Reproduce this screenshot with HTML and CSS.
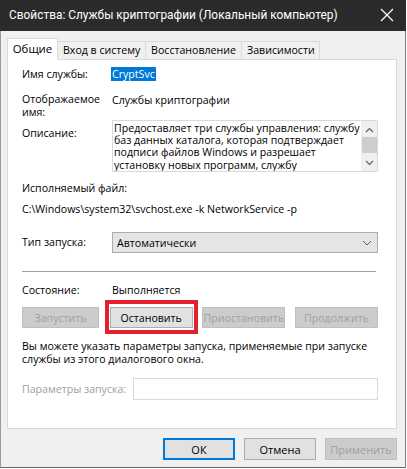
FILE: index.html
```html
<!DOCTYPE html>
<html lang="ru">
<head>
<meta charset="utf-8">
<title>Свойства: Службы криптографии</title>
<link rel="stylesheet" href="styles.css">
</head>
<body>
<div class="window">
  <div class="titlebar">
    <span class="title">Свойства: Службы криптографии (Локальный компьютер)</span>
    <svg class="close" width="14" height="14" viewBox="0 0 14 14"><path d="M1 1 L13 13 M13 1 L1 13" stroke="#fff" stroke-width="1.2" fill="none"/></svg>
  </div>
  <div class="body">
    <div class="tabs">
      <div class="tab active">Общие</div>
      <div class="tab">Вход в систему</div>
      <div class="tab">Восстановление</div>
      <div class="tab">Зависимости</div>
    </div>
    <div class="panel">
      <div class="row row-name">
        <div class="label">Имя службы:</div>
        <div class="value"><span class="selected">CryptSvc</span></div>
      </div>
      <div class="row row-display">
        <div class="label">Отображаемое<br>имя:</div>
        <div class="value">Службы криптографии</div>
      </div>
      <div class="row row-desc">
        <div class="label label-desc">Описание:</div>
        <div class="textbox">
          <div class="textbox-text">Предоставляет три службы управления: службу баз данных каталога, которая подтверждает подписи файлов Windows и разрешает установку новых программ, службу</div>
          <div class="scrollbar">
            <svg class="arrow" width="9" height="6" viewBox="0 0 9 6"><path d="M1 5 L4.5 1.5 L8 5" stroke="#606060" stroke-width="1.2" fill="none"/></svg>
            <div class="thumb"></div>
            <div class="track"></div>
            <svg class="arrow" width="9" height="6" viewBox="0 0 9 6"><path d="M1 1 L4.5 4.5 L8 1" stroke="#606060" stroke-width="1.2" fill="none"/></svg>
          </div>
        </div>
      </div>
      <div class="line line-exe-label">Исполняемый файл:</div>
      <div class="line line-exe">C:\Windows\system32\svchost.exe -k NetworkService -p</div>
      <div class="row row-startup">
        <div class="label">Тип запуска:</div>
        <div class="combo">
          <span>Автоматически</span>
          <svg width="10" height="6" viewBox="0 0 10 6"><path d="M1 1 L5 5 L9 1" stroke="#606060" stroke-width="1" fill="none"/></svg>
        </div>
      </div>
      <div class="separator"></div>
      <div class="row row-status">
        <div class="label">Состояние:</div>
        <div class="value">Выполняется</div>
      </div>
      <div class="service-buttons">
        <button class="btn btn-start" disabled>Запустить</button>
        <button class="btn btn-stop">Остановить</button>
        <button class="btn btn-wide" disabled>Приостановить</button>
        <button class="btn btn-wide" disabled>Продолжить</button>
      </div>
      <div class="hint">Вы можете указать параметры запуска, применяемые при запуске службы из этого диалогового окна.</div>
      <div class="row row-params">
        <div class="label-params">Параметры запуска:</div>
        <div class="input"></div>
      </div>
    </div>
    <div class="footer">
      <button class="btn btn-dialog btn-default">ОК</button>
      <button class="btn btn-dialog">Отмена</button>
      <button class="btn btn-dialog" disabled>Применить</button>
    </div>
  </div>
</div>
</body>
</html>
```
FILE: styles.css
```css
* { box-sizing: border-box; }
html, body { margin: 0; padding: 0; }
body {
  background: #ffffff;
  font-family: "Open Sans", "Noto Sans", sans-serif;
  font-size: 10.6px;
  color: #000;
}
.window {
  width: 406px;
  height: 468px;
  background: #f0f0f0;
  border-left: 1px solid #9a9a9a;
  border-right: 1px solid #7a7a7a;
  border-bottom: 1px solid #6a6a6a;
  display: flex;
  flex-direction: column;
}
.titlebar {
  height: 31px;
  background: #2b2b2b;
  color: #fff;
  display: flex;
  align-items: center;
  justify-content: space-between;
  padding: 0 10px 1px 9px;
  margin-right: -1px;
  margin-left: -1px;
}
.title {
  font-family: Roboto, "Open Sans", sans-serif;
  font-size: 11.9px;
  white-space: nowrap;
}
.close { margin-right: 2px; }
.body { padding: 0 8px 0 6px; }
.tabs {
  display: flex;
  align-items: flex-end;
  height: 29px;
  padding-top: 8px;
  position: relative;
  z-index: 1;
  margin-bottom: -1px;
}
.tab {
  height: 19px;
  line-height: 17px;
  padding: 0 5px;
  border: 1px solid #d9d9d9;
  border-left: none;
  border-bottom: 1px solid #d9d9d9;
  background: #f0f0f0;
  white-space: nowrap;
  text-align: center;
}
.tab.active {
  height: 22px;
  line-height: 20px;
  background: #fff;
  border-left: 1px solid #d9d9d9;
  border-bottom: 1px solid #fff;
  padding: 0;
  width: 51px;
  font-size: 11.4px;
}
.tab:nth-child(2) { width: 88px; }
.tab:nth-child(3) { width: 96px; }
.tab:nth-child(4) { width: 78px; }
.panel {
  height: 370px;
  background: #fff;
  border: 1px solid #d9d9d9;
  padding: 0 18px 0 14px;
}
.row { display: flex; }
.label { width: 90px; flex: none; line-height: 13px; white-space: nowrap; }
.value { line-height: 13px; white-space: nowrap; }
.row-name { margin-top: 8px; height: 13px; }
.selected { background: #0078d7; color: #fff; padding: 0 1px; margin-left: -1px; }
.row-display { margin-top: 12px; height: 26px; }
.row-display .value { padding-top: 1px; }
.row-desc { margin-top: 1px; height: 52px; }
.label-desc { padding-top: 7px; }
.textbox {
  flex: 1;
  border: 1px solid #d9d9d9;
  display: flex;
  height: 52px;
}
.textbox-text {
  flex: 1;
  padding: 1px 0 0 1px;
  line-height: 12.2px;
  overflow: hidden;
  color: #000;
}
.scrollbar {
  width: 16px;
  background: #f0f0f0;
  display: flex;
  flex-direction: column;
  align-items: center;
}
.scrollbar .arrow { margin: 6px 0 4px; flex: none; }
.scrollbar .arrow:last-child { margin: 3px 0 5px; }
.thumb { width: 15px; height: 16px; background: #cdcdcd; flex: none; }
.track { flex: 1; }
.line { line-height: 13px; height: 13px; white-space: nowrap; }
.line-exe-label { margin-top: 10px; }
.line-exe { margin-top: 8px; }
.row-startup { margin-top: 16px; height: 21px; align-items: center; }
.combo {
  flex: 1;
  height: 21px;
  border: 1px solid #adadad;
  background: #e5e5e5;
  display: flex;
  align-items: center;
  justify-content: space-between;
  padding: 0 5px 0 4px;
}
.separator { margin-top: 18px; height: 1px; background: #a0a0a0; margin-right: 2px; }
.row-status { margin-top: 12px; height: 13px; }
.service-buttons {
  margin-top: 10px;
  display: flex;
  justify-content: space-between;
}
.btn {
  font-family: inherit;
  font-size: 10.6px;
  height: 21px;
  border: 1px solid #adadad;
  background: #e1e1e1;
  color: #000;
  padding: 0;
  margin: 0;
}
.btn:disabled {
  background: #cccccc;
  border-color: #bfbfbf;
  color: #a0a0a0;
}
.btn-start { width: 77px; }
.btn-stop { width: 83px; position: relative; margin-left: 1px; }
.btn-stop::after {
  content: "";
  position: absolute;
  left: -6px;
  right: -6px;
  top: -8px;
  bottom: -7px;
  border: 4px solid #e3202b;
}
.btn-wide { width: 83px; }
.hint { margin-top: 12px; line-height: 13px; }
.row-params { margin-top: 12px; align-items: center; height: 22px; }
.label-params { width: 111px; flex: none; color: #a0a0a0; white-space: nowrap; }
.input { flex: 1; height: 22px; border: 1px solid #d9d9d9; background: #fff; }
.footer {
  display: flex;
  justify-content: flex-end;
  gap: 9px;
  margin-top: 9px;
}
.btn-dialog { width: 72px; height: 22px; font-size: 11px; }
.btn-default { border: 2px solid #0078d7; }
```
